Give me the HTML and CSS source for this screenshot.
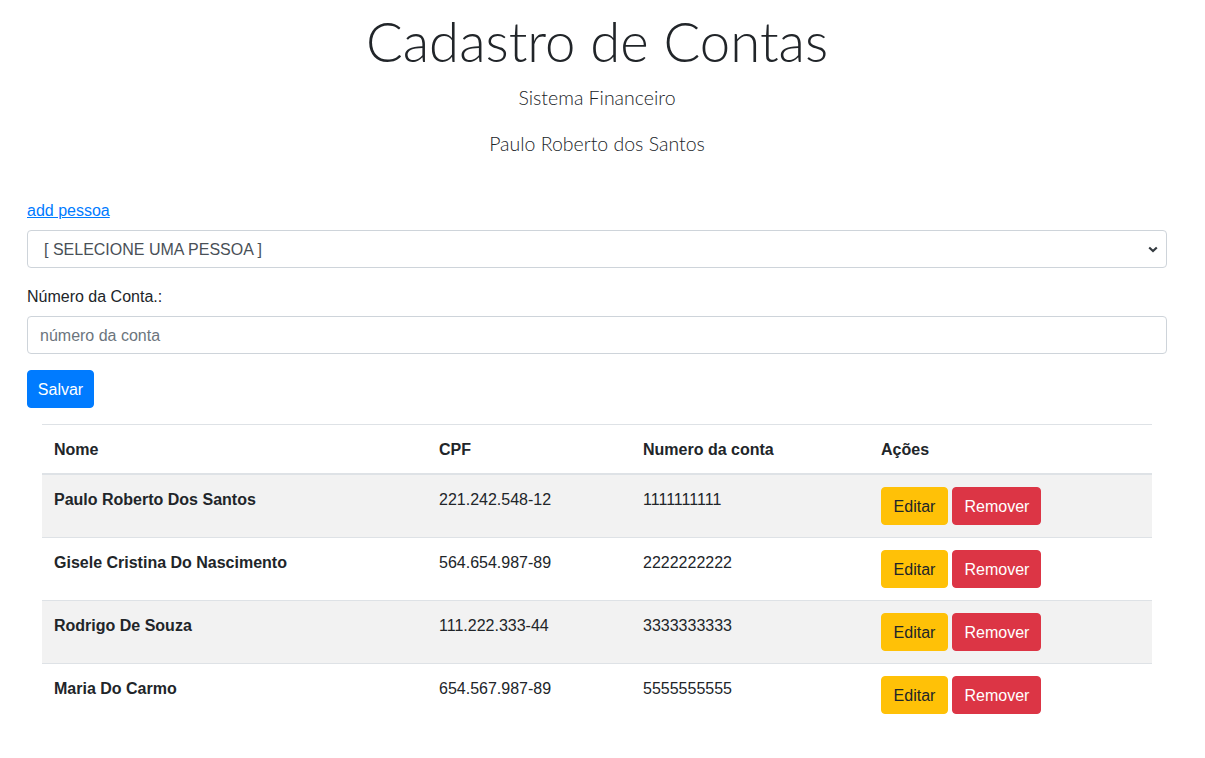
FILE: index.html
```html
<!DOCTYPE html>
<html lang="pt-BR">
<head>
<meta charset="utf-8">
<title>Cadastro de Contas</title>
<link rel="stylesheet" href="styles.css">
</head>
<body>
<div class="page">
  <header class="header">
    <h1 class="title">Cadastro de Contas</h1>
    <p class="lead">Sistema Financeiro</p>
    <p class="lead lead-user">Paulo Roberto dos Santos</p>
  </header>

  <form class="form">
    <a class="link" href="#">add pessoa</a>
    <div class="form-group select-group">
      <div class="select">
        <span class="select-text">[ SELECIONE UMA PESSOA ]</span>
        <svg class="chevron" width="10" height="7" viewBox="0 0 10 7"><polyline points="1.2,1.5 5,5 8.8,1.5" fill="none" stroke="#343a40" stroke-width="2.2"/></svg>
      </div>
    </div>
    <div class="form-group">
      <label class="label">Número da Conta.:</label>
      <div class="input"><span class="placeholder">número da conta</span></div>
    </div>
    <div class="actions">
      <button type="button" class="btn btn-primary btn-save">Salvar</button>
    </div>
  </form>

  <table class="table">
    <colgroup>
      <col class="c1"><col class="c2"><col class="c3"><col class="c4">
    </colgroup>
    <thead>
      <tr><th>Nome</th><th>CPF</th><th>Numero da conta</th><th>Ações</th></tr>
    </thead>
    <tbody>
      <tr class="odd">
        <td class="name">Paulo Roberto Dos Santos</td><td>221.242.548-12</td><td>1111111111</td>
        <td class="btns"><button type="button" class="btn btn-warning btn-edit">Editar</button> <button type="button" class="btn btn-danger btn-remove">Remover</button></td>
      </tr>
      <tr>
        <td class="name">Gisele Cristina Do Nascimento</td><td>564.654.987-89</td><td>2222222222</td>
        <td class="btns"><button type="button" class="btn btn-warning btn-edit">Editar</button> <button type="button" class="btn btn-danger btn-remove">Remover</button></td>
      </tr>
      <tr class="odd">
        <td class="name">Rodrigo De Souza</td><td>111.222.333-44</td><td>3333333333</td>
        <td class="btns"><button type="button" class="btn btn-warning btn-edit">Editar</button> <button type="button" class="btn btn-danger btn-remove">Remover</button></td>
      </tr>
      <tr>
        <td class="name">Maria Do Carmo</td><td>654.567.987-89</td><td>5555555555</td>
        <td class="btns"><button type="button" class="btn btn-warning btn-edit">Editar</button> <button type="button" class="btn btn-danger btn-remove">Remover</button></td>
      </tr>
    </tbody>
  </table>
</div>
</body>
</html>
```

FILE: styles.css
```css
html, body {
  margin: 0;
  padding: 0;
  background: #fff;
}

body {
  font-family: "Liberation Sans", Arial, sans-serif;
  font-size: 16px;
  line-height: 1.5;
  color: #212529;
}

.page {
  width: 1140px;
  margin-left: 27px;
  padding-top: 8px;
}

.header {
  text-align: center;
}

.title {
  margin: 0;
  font-family: Lato, "Open Sans", sans-serif;
  font-weight: 300;
  font-size: 54.5px;
  line-height: 67px;
  color: #212529;
}

.lead {
  margin: 8px 0 0;
  font-family: Lato, "Open Sans", sans-serif;
  font-weight: 300;
  font-size: 19.5px;
  line-height: 30px;
}

.lead-user {
  margin-top: 16px;
}

.form {
  margin-top: 39px;
  display: flex;
  flex-direction: column;
}

.link {
  color: #007bff;
  text-decoration: underline;
  line-height: 26px;
  align-self: flex-start;
}

.form-group {
  margin-bottom: 16px;
  display: flex;
  flex-direction: column;
}

.select-group {
  margin-top: 6px;
}

.select,
.input {
  box-sizing: border-box;
  height: 38px;
  border: 1px solid #ced4da;
  border-radius: 4px;
  display: flex;
  align-items: center;
  background: #fff;
}

.select {
  padding: 2px 8px 0 16px;
  justify-content: space-between;
  color: #495057;
}

.chevron {
  display: block;
  margin-top: -2px;
}

.label {
  margin-bottom: 8px;
  padding-top: 1px;
  line-height: 23px;
}

.input {
  padding: 1px 12px 0;
}

.placeholder {
  color: #6c757d;
}

.actions {
  display: flex;
}

.btn {
  box-sizing: border-box;
  height: 38px;
  padding: 1px 0 0;
  border: 1px solid transparent;
  border-radius: 4px;
  font-family: inherit;
  font-size: 16px;
  line-height: 24px;
  text-align: center;
  cursor: pointer;
  vertical-align: middle;
}

.btn-save { width: 67px; }
.btn-edit { width: 67px; }
.btn-remove { width: 89px; }

.btn-primary {
  background: #007bff;
  border-color: #007bff;
  color: #fff;
}

.btn-warning {
  background: #ffc107;
  border-color: #ffc107;
  color: #212529;
}

.btn-danger {
  background: #dc3545;
  border-color: #dc3545;
  color: #fff;
}

.table {
  margin: 16px 15px 0;
  width: 1110px;
  border-collapse: collapse;
  table-layout: fixed;
}

.c1 { width: 385px; }
.c2 { width: 204px; }
.c3 { width: 238px; }
.c4 { width: 283px; }

.table th,
.table td {
  padding: 12px 12px 10px;
  text-align: left;
  vertical-align: top;
  border-top: 1px solid #dee2e6;
  line-height: 26px;
}

.table td.btns {
  padding: 12px;
  line-height: 24px;
}

.table th {
  font-weight: 700;
  border-bottom: 2px solid #dee2e6;
}

.table td.name {
  font-weight: 700;
}

.table tr.odd td {
  background: #f2f2f2;
}
```
